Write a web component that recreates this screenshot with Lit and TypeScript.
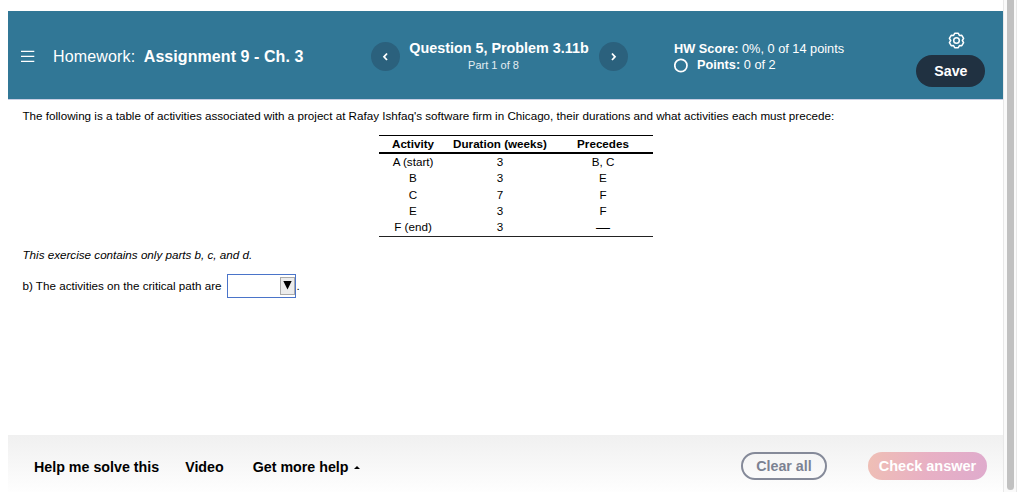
import { LitElement, html, css, svg } from 'lit';
import { customElement, property } from 'lit/decorators.js';

interface Activity {
  name: string;
  duration: number;
  precedes: string;
}

const ACTIVITIES: Activity[] = [
  { name: 'A (start)', duration: 3, precedes: 'B, C' },
  { name: 'B', duration: 3, precedes: 'E' },
  { name: 'C', duration: 7, precedes: 'F' },
  { name: 'E', duration: 3, precedes: 'F' },
  { name: 'F (end)', duration: 3, precedes: '—' },
];

@customElement('homework-header')
export class HomeworkHeader extends LitElement {
  @property({ type: String }) assignment = '';
  @property({ type: String }) question = '';

  static styles = css`
    :host {
      display: flex;
      align-items: flex-start;
      height: 89px;
      box-sizing: border-box;
      background: #317796;
      border-bottom: 1px solid #c9cfe4;
      color: #fff;
      white-space: nowrap;
    }
    svg {
      display: block;
      fill: none;
      stroke: currentColor;
    }
    .title {
      display: flex;
      align-items: center;
      width: 363px;
      height: 91px;
      box-sizing: border-box;
      padding-left: 13px;
      font-size: 16px;
    }
    .title .kind {
      margin-left: 18px;
      letter-spacing: 0.15px;
    }
    .title b {
      margin-left: 8.5px;
      letter-spacing: 0.07px;
    }
    .nav {
      display: flex;
      width: 302px;
      padding-top: 28px;
    }
    .round {
      display: flex;
      align-items: center;
      justify-content: center;
      width: 29px;
      height: 29px;
      margin-top: 3px;
      padding: 0;
      border: 0;
      border-radius: 50%;
      background: #2b617d;
      color: #fff;
    }
    .question {
      width: 199px;
      text-align: center;
    }
    .question b {
      display: block;
      margin-right: 1px;
      font-size: 14.35px;
      line-height: 18px;
    }
    .question span {
      display: block;
      margin-right: 12px;
      font-size: 11px;
      line-height: 16px;
      color: #e3edf2;
    }
    .score {
      width: 235px;
      padding-top: 29px;
      padding-left: 1px;
      box-sizing: border-box;
      font-size: 12.75px;
      line-height: 17px;
    }
    .points {
      display: flex;
      align-items: center;
      line-height: 16px;
    }
    .points svg {
      margin-right: 8px;
    }
    .actions {
      display: flex;
      flex-direction: column;
      align-items: center;
      margin-left: 8.4px;
      padding-top: 21px;
    }
    .actions svg {
      margin-left: 11px;
    }
    .save {
      width: 69px;
      height: 32px;
      margin-top: 6px;
      padding: 0;
      border: 0;
      border-radius: 16px;
      background: #203141;
      color: #fff;
      font: bold 14.2px 'Liberation Sans', Arial, sans-serif;
    }
  `;

  private chevron(d: string) {
    return svg`<svg width="8" height="10" viewBox="0 0 8 10" stroke-width="1.8"><path d=${d} /></svg>`;
  }

  render() {
    return html`
      <div class="title">
        <svg width="14" height="14" viewBox="0 0 14 14" stroke-width="1.3">
          <path d="M0 1.3h13.3M0 6.3h13.3M0 11.4h13.3" />
        </svg>
        <span class="kind">Homework:</span>
        <b>${this.assignment}</b>
      </div>
      <div class="nav">
        <button class="round" aria-label="Previous">${this.chevron('M5 1.5L2 4.8l3 3.2')}</button>
        <div class="question">
          <b>${this.question}</b>
          <span>Part 1 of 8</span>
        </div>
        <button class="round" aria-label="Next">${this.chevron('M2 1.5l3 3.3-3 3.2')}</button>
      </div>
      <div class="score">
        <div><b>HW Score:</b> 0%, 0 of 14 points</div>
        <div class="points">
          <svg width="15" height="15" viewBox="0 0 15 15" stroke-width="1.7"><circle cx="6.9" cy="7.5" r="6.1" /></svg>
          <span><b>Points:</b> 0 of 2</span>
        </div>
      </div>
      <div class="actions">
        <svg width="17" height="17" viewBox="0 0 17 17" stroke-width="1.5" stroke-linejoin="round">
          <path
            d="M6.7 1.3h3.6l1.1 2.1 2.4-.1 1.8 3.1-1.3 2.1 1.3 2.1-1.8 3.1-2.4-.1-1.1 2.1H6.7l-1.1-2.1-2.4.1-1.8-3.1 1.3-2.1-1.3-2.1 1.8-3.1 2.4.1z"
          />
          <circle cx="8.5" cy="8.5" r="2.8" />
        </svg>
        <button class="save">Save</button>
      </div>
    `;
  }
}

@customElement('homework-footer')
export class HomeworkFooter extends LitElement {
  static styles = css`
    :host {
      display: flex;
      align-items: center;
      height: 57px;
      box-sizing: border-box;
      padding: 5px 16px 0 26px;
      background: linear-gradient(#f0f0f0, #fefefe);
      font-size: 14.25px;
      font-weight: bold;
      white-space: nowrap;
    }
    span {
      padding-top: 1px;
    }
    .video {
      margin: 0 29px 0 26px;
    }
    .caret {
      width: 0;
      margin: 2px 0 0 5px;
      border: 3px solid transparent;
      border-top: 0;
      border-bottom: 3px solid #000;
    }
    button {
      height: 28px;
      padding: 0;
      border: 0;
      border-radius: 14px;
      font: inherit;
    }
    .clear {
      width: 86px;
      margin-left: auto;
      border: 2px solid #858a99;
      background: transparent;
      color: #7c8292;
    }
    .check {
      width: 119px;
      margin-left: 41px;
      background: linear-gradient(100deg, #efbfb5, #e8b0c4 50%, #dfabcd);
      color: #fff;
      font-size: 14.5px;
    }
  `;

  render() {
    return html`
      <span class="help">Help me solve this</span>
      <span class="video">Video</span>
      <span class="more">Get more help</span>
      <span class="caret"></span>
      <button class="clear">Clear all</button>
      <button class="check">Check answer</button>
    `;
  }
}

@customElement('app-root')
export class AppRoot extends LitElement {
  static styles = css`
    :host {
      display: flex;
      height: 492px;
      box-sizing: border-box;
      padding-left: 8px;
      overflow: hidden;
      background: #fff;
      color: #000;
      font-family: 'Liberation Sans', Arial, sans-serif;
    }
    .page {
      display: flex;
      flex-direction: column;
      width: 995px;
      box-sizing: border-box;
      padding-top: 11px;
    }
    .content {
      flex: 1;
      padding: 8px 15px 0 14.5px;
      font-size: 11.65px;
      line-height: 16px;
      white-space: nowrap;
    }
    p {
      margin: 0;
    }
    table {
      width: 274px;
      margin: 11px 0 0 356.5px;
      border-collapse: collapse;
      border-top: 1px solid #000;
      border-bottom: 1px solid #222;
      table-layout: fixed;
      text-align: center;
    }
    th,
    td {
      height: 16.2px;
      padding: 0;
      line-height: 16px;
    }
    th {
      border-bottom: 2px solid #000;
    }
    .col-activity {
      width: 68px;
    }
    .col-duration {
      width: 106px;
    }
    tbody tr:last-child td {
      height: 17px;
    }
    tbody tr:last-child td:last-child {
      font-size: 14px;
    }
    .note {
      margin-top: 10px;
      font-style: italic;
    }
    .answer {
      display: flex;
      align-items: center;
      margin-top: 11px;
    }
    .select {
      display: flex;
      justify-content: flex-end;
      width: 69px;
      height: 24px;
      box-sizing: border-box;
      margin: 0 1px 0 5px;
      padding: 2px 0;
      border: 1px solid #4a74c9;
    }
    .arrow {
      display: flex;
      justify-content: center;
      width: 15px;
      box-sizing: border-box;
      padding-top: 3px;
      border: 1px solid #aaa;
      background: #ececec;
    }
    .scrollbar {
      width: 14px;
      box-sizing: border-box;
      padding: 0 3px 2px;
      border: solid #e8e8e8;
      border-width: 0 1px;
      background: #fafafa;
    }
    .thumb {
      width: 7px;
      height: 490px;
      border-radius: 0 0 3.5px 3.5px;
      background: #c1c1c1;
    }
  `;

  render() {
    return html`
      <div class="page">
        <homework-header assignment="Assignment 9 - Ch. 3" question="Question 5, Problem 3.11b"></homework-header>
        <main class="content">
          <p class="intro">
            The following is a table of activities associated with a project at Rafay Ishfaq's software firm in Chicago,
            their durations and what activities each must precede:
          </p>
          <table>
            <thead>
              <tr>
                <th class="col-activity">Activity</th>
                <th class="col-duration">Duration (weeks)</th>
                <th>Precedes</th>
              </tr>
            </thead>
            <tbody>
              ${ACTIVITIES.map(
                (a) => html`<tr><td>${a.name}</td><td>${a.duration}</td><td>${a.precedes}</td></tr>`
              )}
            </tbody>
          </table>
          <p class="note">This exercise contains only parts b, c, and d.</p>
          <div class="answer">
            <span>b) The activities on the critical path are</span>
            <span class="select">
              <span class="arrow">
                <svg width="9" height="9" viewBox="0 0 9 9"><path d="M.3 0h8.4L4.5 8.5z" /></svg>
              </span>
            </span>
            <span>.</span>
          </div>
        </main>
        <homework-footer></homework-footer>
      </div>
      <div class="scrollbar"><div class="thumb"></div></div>
    `;
  }
}

declare global {
  interface HTMLElementTagNameMap {
    'homework-header': HomeworkHeader;
    'homework-footer': HomeworkFooter;
    'app-root': AppRoot;
  }
}
